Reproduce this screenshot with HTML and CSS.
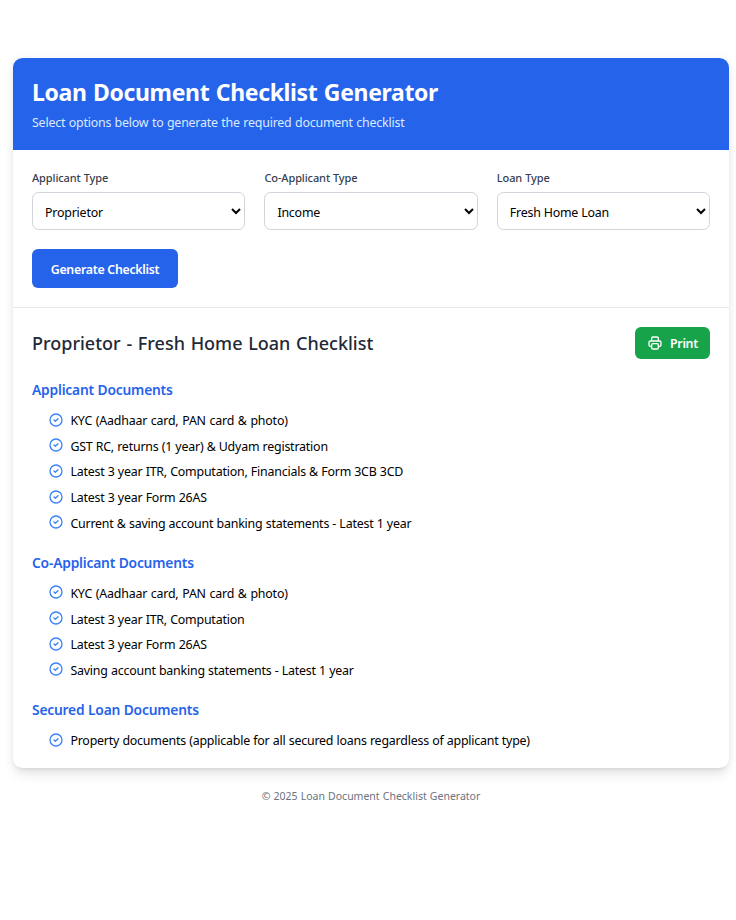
FILE: index.html
```html
<!DOCTYPE html>
<html lang="en">
<head>
<meta charset="utf-8">
<title>Loan Document Checklist Generator</title>
<link rel="stylesheet" href="styles.css">
</head>
<body>
<svg class="sprite" aria-hidden="true">
  <symbol id="check" viewBox="0 0 24 24"><path d="M9 12l2 2 4-4m6 2a9 9 0 11-18 0 9 9 0 0118 0z"/></symbol>
</svg>
<main class="card">
  <header class="card-header">
    <h1>Loan Document Checklist Generator</h1>
    <p>Select options below to generate the required document checklist</p>
  </header>
  <form class="options">
    <div class="fields">
      <div class="field">
        <label for="applicant">Applicant Type</label>
        <select id="applicant"><option>Proprietor</option></select>
      </div>
      <div class="field">
        <label for="coapplicant">Co-Applicant Type</label>
        <select id="coapplicant"><option>Income</option></select>
      </div>
      <div class="field">
        <label for="loan">Loan Type</label>
        <select id="loan"><option>Fresh Home Loan</option></select>
      </div>
    </div>
    <button type="button" class="generate">Generate Checklist</button>
  </form>
  <section class="results">
    <div class="results-head">
      <h2>Proprietor - Fresh Home Loan Checklist</h2>
      <button type="button" class="print">
        <svg viewBox="0 0 24 24"><path d="M17 17h2a2 2 0 002-2v-4a2 2 0 00-2-2H5a2 2 0 00-2 2v4a2 2 0 002 2h2m2 4h6a2 2 0 002-2v-4a2 2 0 00-2-2H9a2 2 0 00-2 2v4a2 2 0 002 2zm8-12V5a2 2 0 00-2-2H9a2 2 0 00-2 2v4h10z"/></svg>
        <span>Print</span>
      </button>
    </div>
    <div class="group">
      <h3>Applicant Documents</h3>
      <ul>
        <li class="wide"><svg><use href="#check"/></svg><span>KYC (Aadhaar card, PAN card &amp; photo)</span></li>
        <li><svg><use href="#check"/></svg><span>GST RC, returns (1 year) &amp; Udyam registration</span></li>
        <li><svg><use href="#check"/></svg><span>Latest 3 year ITR, Computation, Financials &amp; Form 3CB 3CD</span></li>
        <li><svg><use href="#check"/></svg><span>Latest 3 year Form 26AS</span></li>
        <li><svg><use href="#check"/></svg><span>Current &amp; saving account banking statements - Latest 1 year</span></li>
      </ul>
    </div>
    <div class="group">
      <h3>Co-Applicant Documents</h3>
      <ul>
        <li class="wide"><svg><use href="#check"/></svg><span>KYC (Aadhaar card, PAN card &amp; photo)</span></li>
        <li><svg><use href="#check"/></svg><span>Latest 3 year ITR, Computation</span></li>
        <li><svg><use href="#check"/></svg><span>Latest 3 year Form 26AS</span></li>
        <li><svg><use href="#check"/></svg><span>Saving account banking statements - Latest 1 year</span></li>
      </ul>
    </div>
    <div class="group">
      <h3>Secured Loan Documents</h3>
      <ul>
        <li><svg><use href="#check"/></svg><span>Property documents (applicable for all secured loans regardless of applicant type)</span></li>
      </ul>
    </div>
  </section>
</main>
<footer>© 2025 Loan Document Checklist Generator</footer>
</body>
</html>
```
FILE: styles.css
```css
* { box-sizing: border-box; margin: 0; padding: 0; }
body {
  background: #fff;
  padding: 58px 7px 0 13px;
  font-family: "Segoe UI", "Noto Sans", sans-serif;
  font-size: 12.4px;
  letter-spacing: -0.2px;
  word-spacing: 0.2px;
  color: #000;
  white-space: nowrap;
}
.sprite { display: none; }
.card {
  height: 710px;
  border-radius: 9.6px;
  overflow: hidden;
  background: #fff;
  box-shadow: 0 8px 12px -2.4px rgba(0,0,0,.1), 0 3.2px 4.8px -3.2px rgba(0,0,0,.1), 0 0 10px rgba(0,0,0,.05);
}
.card-header { height: 92px; padding: 20px 19px 0; background: #2563eb; color: #fff; }
h1 { font-size: 23px; line-height: 29px; font-weight: 700; letter-spacing: -0.35px; word-spacing: 0.8px; }
.card-header p { margin-top: 5px; line-height: 21px; color: #dbeafe; word-spacing: 0.45px; }
.options { height: 158px; padding: 19px; border-bottom: 1px solid #e5e7eb; }
.fields { display: grid; grid-template-columns: repeat(3, 1fr); gap: 19.2px; }
label { display: block; height: 23px; line-height: 18px; font-size: 11px; font-weight: 500; color: #374151; letter-spacing: -0.1px; }
select {
  display: block; width: 100%; height: 38px; padding: 2px 0 0 8px;
  border: 1px solid #d1d5db; border-radius: 6.4px; background: #fff;
  font: inherit; letter-spacing: inherit; color: #000;
}
button { border: 0; border-radius: 6px; color: #fff; font: inherit; font-weight: 600; letter-spacing: -0.3px; }
.generate { display: block; width: 146px; height: 39px; padding-top: 1px; margin-top: 19px; background: #2563eb; }
.results { padding: 19px; }
.results-head { display: flex; justify-content: space-between; height: 32px; margin-bottom: 20px; }
h2 { font-size: 18px; line-height: 32px; font-weight: 500; color: #1f2937; letter-spacing: 0; word-spacing: 1px; }
.print { display: flex; align-items: center; width: 75px; height: 32px; padding-left: 12px; gap: 7px; background: #16a34a; }
svg { flex: none; fill: none; stroke: currentColor; stroke-width: 2; stroke-linecap: round; stroke-linejoin: round; width: 16px; height: 16px; }
.group { margin-bottom: 13.6px; }
h3 { height: 22px; margin-bottom: 9px; font-size: 13.8px; line-height: 22px; font-weight: 600; color: #2563eb; }
ul { list-style: none; padding-left: 16px; }
li { display: flex; height: 25.67px; line-height: 22px; }
.wide { word-spacing: 0.7px; }
li svg { color: #3b82f6; margin: 1.6px 6.4px 0 0; }
footer { margin-top: 19px; text-align: center; font-size: 10.5px; line-height: 18px; color: #6b7280; letter-spacing: 0; word-spacing: 0.4px; }
```
